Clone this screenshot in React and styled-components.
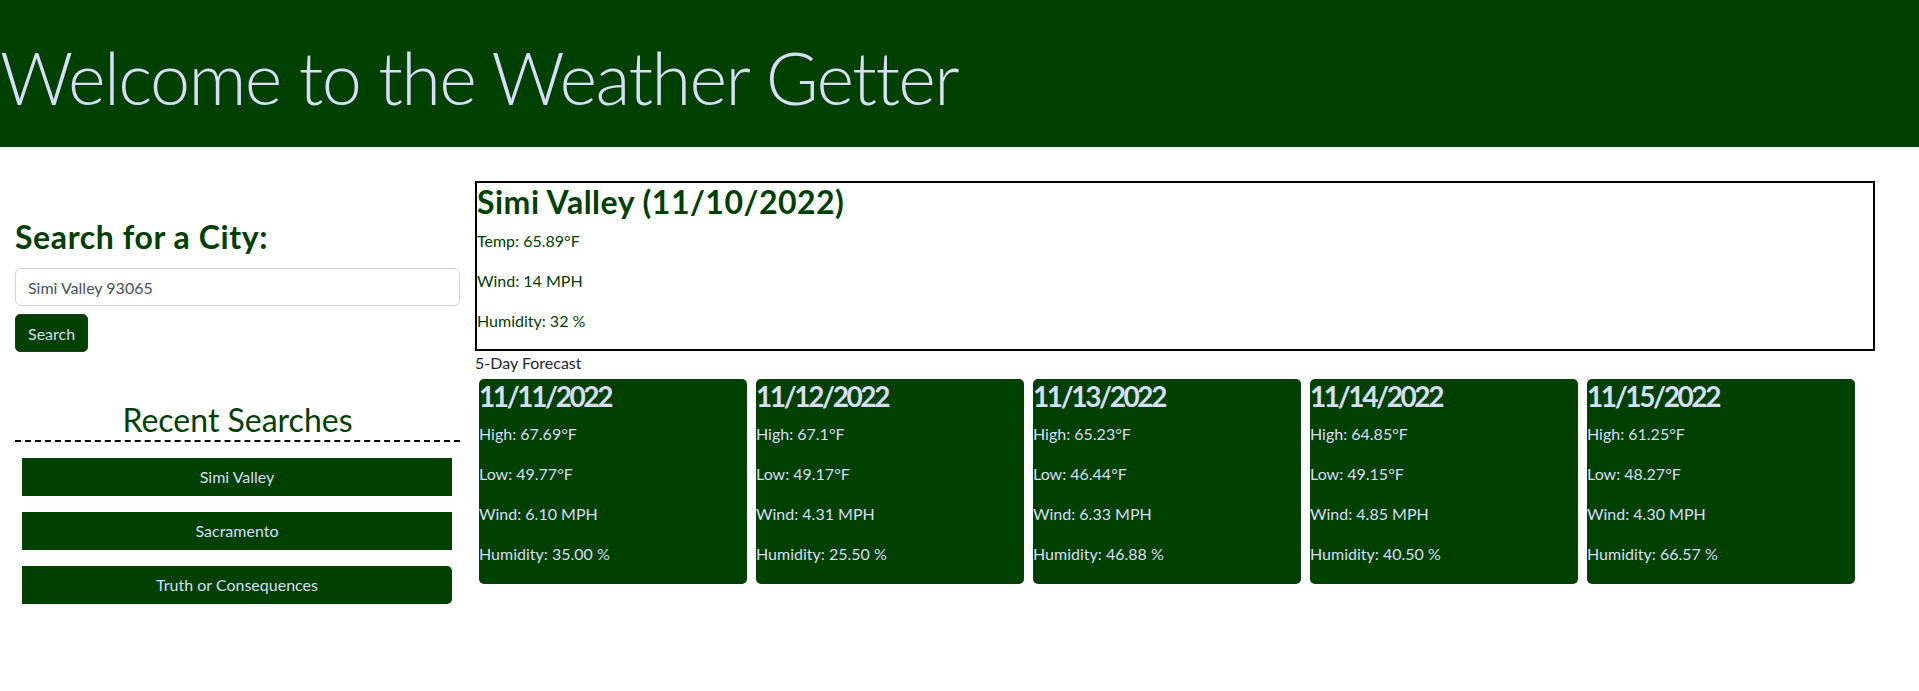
import styled, { createGlobalStyle } from "styled-components";

const GREEN = "#004000";
const LAVENDER = "#d8def8";

const forecast = [
    { date: "11/11/2022", high: "67.69", low: "49.77", wind: "6.10", humidity: "35.00" },
    { date: "11/12/2022", high: "67.1", low: "49.17", wind: "4.31", humidity: "25.50" },
    { date: "11/13/2022", high: "65.23", low: "46.44", wind: "6.33", humidity: "46.88" },
    { date: "11/14/2022", high: "64.85", low: "49.15", wind: "4.85", humidity: "40.50" },
    { date: "11/15/2022", high: "61.25", low: "48.27", wind: "4.30", humidity: "66.57" },
];

const recent = ["Simi Valley", "Sacramento", "Truth or Consequences"];

export default function App() {
    return (
        <>
            <GlobalStyle />
            <Header>
                <Title>Welcome to the Weather Getter</Title>
            </Header>
            <Main>
                <Sidebar>
                    <SearchHeading>Search for a City:</SearchHeading>
                    <CityInput type="text" defaultValue="Simi Valley 93065" />
                    <SearchButton>Search</SearchButton>
                    <RecentHeading>Recent Searches</RecentHeading>
                    <RecentList>
                        {recent.map((city, i) => (
                            <RecentButton key={city} $last={i === recent.length - 1}>
                                {city}
                            </RecentButton>
                        ))}
                    </RecentList>
                </Sidebar>
                <Content>
                    <Current>
                        <CityName>Simi Valley (11/10/2022)</CityName>
                        <Stat>Temp: 65.89°F</Stat>
                        <Stat>Wind: 14 MPH</Stat>
                        <Stat>Humidity: 32 %</Stat>
                    </Current>
                    <ForecastLabel>5-Day Forecast</ForecastLabel>
                    <ForecastRow>
                        {forecast.map((day) => (
                            <Card key={day.date}>
                                <CardDate>{day.date}</CardDate>
                                <CardStat>High: {day.high}°F</CardStat>
                                <CardStat>Low: {day.low}°F</CardStat>
                                <CardStat>Wind: {day.wind} MPH</CardStat>
                                <CardStat>Humidity: {day.humidity} %</CardStat>
                            </Card>
                        ))}
                    </ForecastRow>
                </Content>
            </Main>
        </>
    );
}

const GlobalStyle = createGlobalStyle`
    *, *::before, *::after {
        box-sizing: border-box;
    }
    body {
        margin: 0;
        background: #fff;
        color: #212529;
        font-family: Lato, "Open Sans", sans-serif;
        font-size: 16px;
        line-height: 1.5;
    }
`;

const Header = styled.header`
    height: 147px;
    padding-top: 34px;
    background: ${GREEN};
`;

const Title = styled.h1`
    margin: 0;
    font-size: 72px;
    font-weight: 300;
    line-height: 1.2;
    letter-spacing: -1.6px;
    color: ${LAVENDER};
`;

const Main = styled.main`
    display: flex;
    gap: 15px;
    padding: 34px 44px 40px 15px;
`;

const Sidebar = styled.aside`
    flex: none;
    width: 445px;
    padding-top: 37px;
`;

const SearchHeading = styled.h2`
    margin: 0 0 12px;
    font-size: 32px;
    font-weight: 700;
    line-height: 1.2;
    letter-spacing: 0.6px;
    color: ${GREEN};
`;

const CityInput = styled.input`
    display: block;
    width: 100%;
    height: 38px;
    padding: 6px 12px;
    border: 1px solid #ced4da;
    border-radius: 6px;
    font-family: inherit;
    font-size: 16px;
    color: #495057;
    outline: none;
`;

const SearchButton = styled.button`
    display: block;
    height: 38px;
    margin-top: 8px;
    padding: 6px 12px;
    border: 1px solid #243524;
    border-radius: 5px;
    background: ${GREEN};
    color: ${LAVENDER};
    font-family: inherit;
    font-size: 16px;
`;

const RecentHeading = styled.h2`
    margin: 49px 0 0;
    font-size: 32px;
    font-weight: 400;
    line-height: 1.2;
    text-align: center;
    color: ${GREEN};
    border-bottom: 2px dashed #000;
`;

const RecentList = styled.div`
    display: flex;
    flex-direction: column;
    gap: 16px;
    padding: 16px 8px 0 7px;
`;

const RecentButton = styled.button`
    height: 38px;
    border: none;
    border-radius: ${(p) => (p.$last ? "0 5px 5px 0" : "0")};
    background: ${GREEN};
    color: ${LAVENDER};
    font-family: inherit;
    font-size: 16px;
`;

const Content = styled.section`
    flex: none;
    width: 1400px;
`;

const Current = styled.div`
    border: 2px solid #000;
`;

const CityName = styled.h2`
    margin: 0 0 8px;
    font-size: 32px;
    font-weight: 700;
    line-height: 1.2;
    letter-spacing: 0.5px;
    color: ${GREEN};
`;

const Stat = styled.p`
    margin: 0 0 16px;
    color: ${GREEN};
`;

const ForecastLabel = styled.p`
    margin: 0;
`;

const ForecastRow = styled.div`
    display: flex;
    gap: 9px;
    padding: 4px 0 0 4px;
`;

const Card = styled.div`
    width: 268px;
    padding-bottom: 2px;
    border-radius: 5px;
    background: ${GREEN};
    color: ${LAVENDER};
`;

const CardDate = styled.h3`
    margin: 0 0 8px;
    font-size: 28px;
    font-weight: 700;
    line-height: 35px;
    letter-spacing: -2.4px;
`;

const CardStat = styled.p`
    margin: 0 0 16px;
`;
